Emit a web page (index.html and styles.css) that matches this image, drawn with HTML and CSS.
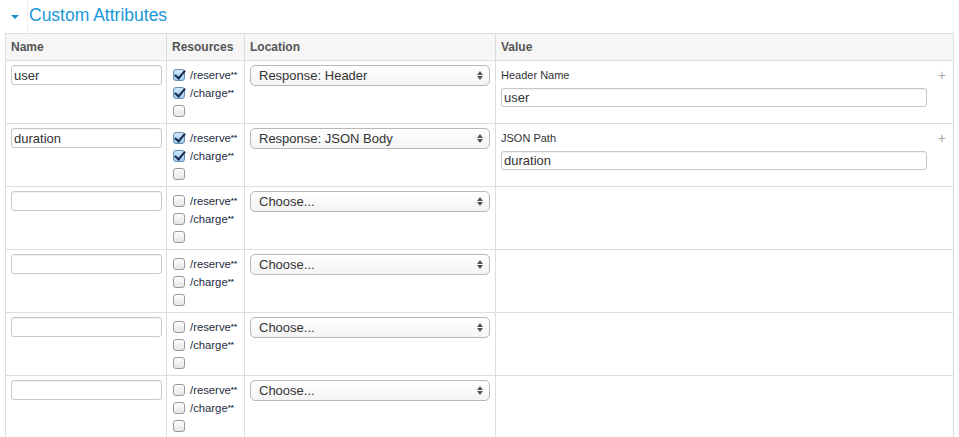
FILE: index.html
```html
<!DOCTYPE html>
<html>
<head>
<meta charset="utf-8">
<link rel="stylesheet" href="styles.css">
</head>
<body>
<div class="section-header">
  <div class="toggle"><span class="caret"></span></div>
  <h2 class="title">Custom Attributes</h2>
</div>
<table class="attrs">
  <colgroup>
    <col class="c-name"><col class="c-res"><col class="c-loc"><col class="c-val">
  </colgroup>
  <thead>
    <tr><th>Name</th><th>Resources</th><th>Location</th><th>Value</th></tr>
  </thead>
  <tbody>
    <tr>
      <td><input class="text name" type="text" value="user"></td>
      <td class="res">
        <label class="cb"><span class="box checked"></span>/reserve<sup>**</sup></label>
        <label class="cb"><span class="box checked"></span>/charge<sup>**</sup></label>
        <label class="cb"><span class="box"></span></label>
      </td>
      <td><div class="select">Response: Header<span class="arrows"><i class="up"></i><i class="down"></i></span></div></td>
      <td class="val">
        <div class="val-head"><span class="val-label">Header Name</span><span class="plus">+</span></div>
        <input class="text wide" type="text" value="user">
      </td>
    </tr>
    <tr>
      <td><input class="text name" type="text" value="duration"></td>
      <td class="res">
        <label class="cb"><span class="box checked"></span>/reserve<sup>**</sup></label>
        <label class="cb"><span class="box checked"></span>/charge<sup>**</sup></label>
        <label class="cb"><span class="box"></span></label>
      </td>
      <td><div class="select">Response: JSON Body<span class="arrows"><i class="up"></i><i class="down"></i></span></div></td>
      <td class="val">
        <div class="val-head"><span class="val-label">JSON Path</span><span class="plus">+</span></div>
        <input class="text wide" type="text" value="duration">
      </td>
    </tr>
    <tr>
      <td><input class="text name" type="text" value=""></td>
      <td class="res">
        <label class="cb"><span class="box"></span>/reserve<sup>**</sup></label>
        <label class="cb"><span class="box"></span>/charge<sup>**</sup></label>
        <label class="cb"><span class="box"></span></label>
      </td>
      <td><div class="select">Choose...<span class="arrows"><i class="up"></i><i class="down"></i></span></div></td>
      <td class="val"></td>
    </tr>
    <tr>
      <td><input class="text name" type="text" value=""></td>
      <td class="res">
        <label class="cb"><span class="box"></span>/reserve<sup>**</sup></label>
        <label class="cb"><span class="box"></span>/charge<sup>**</sup></label>
        <label class="cb"><span class="box"></span></label>
      </td>
      <td><div class="select">Choose...<span class="arrows"><i class="up"></i><i class="down"></i></span></div></td>
      <td class="val"></td>
    </tr>
    <tr>
      <td><input class="text name" type="text" value=""></td>
      <td class="res">
        <label class="cb"><span class="box"></span>/reserve<sup>**</sup></label>
        <label class="cb"><span class="box"></span>/charge<sup>**</sup></label>
        <label class="cb"><span class="box"></span></label>
      </td>
      <td><div class="select">Choose...<span class="arrows"><i class="up"></i><i class="down"></i></span></div></td>
      <td class="val"></td>
    </tr>
    <tr>
      <td><input class="text name" type="text" value=""></td>
      <td class="res">
        <label class="cb"><span class="box"></span>/reserve<sup>**</sup></label>
        <label class="cb"><span class="box"></span>/charge<sup>**</sup></label>
        <label class="cb"><span class="box"></span></label>
      </td>
      <td><div class="select">Choose...<span class="arrows"><i class="up"></i><i class="down"></i></span></div></td>
      <td class="val"></td>
    </tr>
  </tbody>
</table>
</body>
</html>
```
FILE: styles.css
```css
* { box-sizing: border-box; }
html, body { margin: 0; padding: 0; background: #fff; }
body { font-family: "Liberation Sans", Arial, sans-serif; color: #333; }

.section-header { display: flex; align-items: stretch; height: 33px; }
.toggle { width: 28px; border-right: 1px solid #f0f0f0; display: flex; justify-content: center; align-items: center; padding-left: 3px; }
.caret { width: 0; height: 0; border-left: 4px solid transparent; border-right: 4px solid transparent; border-top: 4px solid #1a8fce; margin-top: 1px; }
.title { margin: 0; padding-left: 1px; font-size: 17.5px; font-weight: normal; color: #1a98d6; line-height: 33px; position: relative; top: -1px; }

.attrs { margin-left: 5px; width: 948px; border-collapse: collapse; table-layout: fixed; }
.c-name { width: 161px; }
.c-res { width: 78px; }
.c-loc { width: 251px; }
.c-val { width: 458px; }
.attrs th, .attrs td { border: 1px solid #ddd; }
.attrs th { height: 27px; background: #f6f6f6; text-align: left; font-size: 12px; font-weight: bold; color: #555; padding: 0 5px; }
.attrs td { height: 63px; vertical-align: top; padding: 4px 5px 0; }

.text { display: block; height: 20px; border: 1px solid #c8c8c8; border-radius: 3px; font-family: "Liberation Sans", Arial, sans-serif; font-size: 13px; color: #333; padding: 0 2px; box-shadow: inset 0 1px 1px rgba(0,0,0,0.06); background: #fff; outline: none; }
.name { width: 151px; }
.wide { width: 426px; height: 19px; }

.attrs td.res { padding: 5px 2px 0 6px; }
.cb { display: flex; align-items: center; height: 18px; font-size: 11.3px; color: #1c2c44; white-space: nowrap; }
.box { width: 12px; height: 12px; border: 1px solid #9a9a9a; border-radius: 3px; background: linear-gradient(#fdfdfd, #e6e6e6); margin-right: 5px; flex: none; position: relative; }
.box.checked { background: linear-gradient(#cfe6f8, #9fcdf0); border-color: #6a8fb0; }
.box.checked::after { content: ""; position: absolute; left: 3px; top: -2px; width: 4px; height: 9px; border-right: 2.5px solid #1a2a55; border-bottom: 2.5px solid #1a2a55; transform: rotate(40deg); }
.cb sup { font-size: 8px; font-weight: bold; vertical-align: 3px; line-height: 0; }

.select { position: relative; width: 240px; height: 21px; border: 1px solid #b8b8b8; border-radius: 5px; background: linear-gradient(#ffffff, #f4f4f4); font-size: 13px; line-height: 19px; padding-left: 8px; color: #333; }
.arrows { position: absolute; right: 6px; top: 5px; display: flex; flex-direction: column; gap: 1px; }
.arrows i { display: block; width: 0; height: 0; border-left: 3px solid transparent; border-right: 3px solid transparent; }
.arrows .up { border-bottom: 4px solid #555; }
.arrows .down { border-top: 4px solid #555; }

.attrs td.val { padding: 7px 5px 0; }
.val-head { display: flex; justify-content: space-between; align-items: center; height: 14px; font-size: 11px; margin-bottom: 6px; }
.val-label { color: #333; }
.plus { color: #aaa; font-size: 14px; margin-right: 2px; }
```
